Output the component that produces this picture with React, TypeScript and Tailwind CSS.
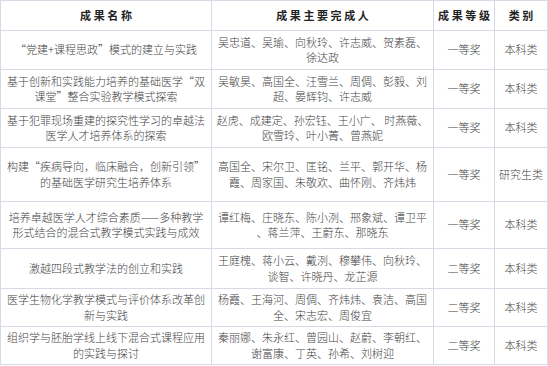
import React from 'react';

type Row = {
  name: string[],
  people: string[],
  level: string,
  kind: string,
  height: string,
};

const rows: Row[] = [
  {
    name: ['“党建+课程思政”模式的建立与实践'],
    people: ['吴忠道、吴瑜、向秋玲、许志威、贺素磊、', '徐达政'],
    level: '一等奖',
    kind: '本科类',
    height: 'h-[39px]',
  },
  {
    name: ['基于创新和实践能力培养的基础医学“双', '课堂”整合实验教学模式探索'],
    people: ['吴敏昊、高国全、汪雪兰、周倜、彭毅、刘', '超、晏辉钧、许志威'],
    level: '一等奖',
    kind: '本科类',
    height: 'h-[39px]',
  },
  {
    name: ['基于犯罪现场重建的探究性学习的卓越法', '医学人才培养体系的探索'],
    people: ['赵虎、成建定、孙宏钰、王小广、 时燕薇、', '欧雪玲、叶小菁、曾燕妮'],
    level: '一等奖',
    kind: '本科类',
    height: 'h-[39px]',
  },
  {
    name: ['构建“疾病导向，临床融合，创新引领”', '的基础医学研究生培养体系'],
    people: ['高国全、宋尔卫、匡铭、兰平、郭开华、杨', '霞、周家国、朱敬欢、曲怀刚、齐炜炜'],
    level: '一等奖',
    kind: '研究生类',
    height: 'h-[54px]',
  },
  {
    name: ['培养卓越医学人才综合素质——多种教学', '形式结合的混合式教学模式实践与成效'],
    people: ['谭红梅、庄晓东、陈小洌、邢象斌、谭卫平', '、蒋兰萍、王蔚东、那晓东'],
    level: '一等奖',
    kind: '本科类',
    height: 'h-[47px]',
  },
  {
    name: ['激越四段式教学法的创立和实践'],
    people: ['王庭槐、蒋小云、戴洌、穆攀伟、向秋玲、', '谈智、许晓丹、龙芷源'],
    level: '二等奖',
    kind: '本科类',
    height: 'h-[40px]',
  },
  {
    name: ['医学生物化学教学模式与评价体系改革创', '新与实践'],
    people: ['杨霞、王海河、周倜、齐炜炜、袁洁、高国', '全、宋志宏、周俊宜'],
    level: '二等奖',
    kind: '本科类',
    height: 'h-[38px]',
  },
  {
    name: ['组织学与胚胎学线上线下混合式课程应用', '的实践与探讨'],
    people: ['秦丽娜、朱永红、曾园山、赵蔚、李朝红、', '谢富康、丁英、孙希、刘树迎'],
    level: '二等奖',
    kind: '本科类',
    height: 'h-[38px]',
  },
];

const Cell = ({ lines, className = '' }: { lines: string[], className?: string }) => (
  <div className={`flex flex-col items-center justify-center border-r border-b border-[#d6dae4] leading-[15.5px] whitespace-nowrap ${className}`}>
    {lines.map((line) => (
      <span key={line}>{line}</span>
    ))}
  </div>
);

const App = () => {
  return (
    <div
      className="w-[548px] h-[366px] bg-white text-[#444] text-[11px] font-light overflow-hidden"
      style={{ fontFamily: '"Noto Sans CJK SC", "Liberation Serif", serif' }}
    >
      <div className="grid grid-cols-[211px_222px_61px_53px] border-l border-t border-[#d6dae4]">
        {/* header */}
        <Cell lines={['成果名称']} className="h-[30px] font-bold text-[#222] tracking-[2.6px] pl-[2.6px]" />
        <Cell lines={['成果主要完成人']} className="h-[30px] font-bold text-[#222] tracking-[2.6px] pl-[2.6px]" />
        <Cell lines={['成果等级']} className="h-[30px] font-bold text-[#222] tracking-[2.6px] pl-[2.6px]" />
        <Cell lines={['类别']} className="h-[30px] font-bold text-[#222] tracking-[2.6px] pl-[2.6px]" />

        {rows.map((row) => (
          <React.Fragment key={row.name[0]}>
            <Cell lines={row.name} className={row.height} />
            <Cell lines={row.people} className={row.height} />
            <Cell lines={[row.level]} className={row.height} />
            <Cell lines={[row.kind]} className={row.height} />
          </React.Fragment>
        ))}
      </div>
    </div>
  );
};

export default App;
